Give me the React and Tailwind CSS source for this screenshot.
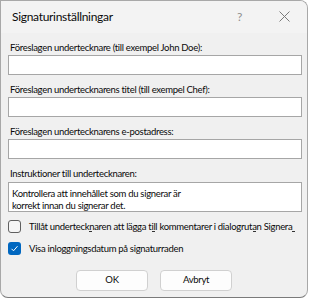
import React from "react";

const font = { fontFamily: 'Lato, "Liberation Sans", Arial, sans-serif' };
const txt = "text-[9.5px] tracking-[-0.3px] text-[#0a0a0a]";

function Label({ children, className = "" }) {
  return (
    <div className={"h-[14px] leading-[14px] pl-[2px] whitespace-nowrap " + txt + " " + className}>
      {children}
    </div>
  );
}

function Input() {
  return <div className="h-[20px] w-[294px] bg-white border border-[#a6a6a6]" />;
}

export default function App() {
  return (
    <div className="w-[310px] h-[300px] bg-white" style={font}>
      <div className="w-[308px] h-[298px] bg-[#f0f0f0] border border-[#a8a8a8] border-b-[#7a7a7a] rounded-tr-[8px] rounded-b-[8px] overflow-hidden flex flex-col">
        <div className="h-[32px] shrink-0 bg-[#f3f3f3] flex items-center pl-[11px] relative">
          <span className="text-[12px] tracking-[-0.3px] text-[#0a0a0a]">Signaturinställningar</span>
          <span className="absolute left-[236px] top-[8px] text-[12px] text-[#8f8f8f] leading-[16px]">?</span>
          <svg className="absolute left-[278px] top-[10px]" width="11" height="11" viewBox="0 0 11 11">
            <path d="M0.5 0.5 L10.5 10.5 M10.5 0.5 L0.5 10.5" stroke="#7a7a7a" strokeWidth="1" />
          </svg>
        </div>
        <div className="flex flex-col pl-[7px]">
          <Label className="mt-[8px]">Föreslagen undertecknare (till exempel John Doe):</Label>
          <Input />
          <Label className="mt-[8px]">Föreslagen undertecknarens titel (till exempel Chef):</Label>
          <Input />
          <Label className="mt-[8px]">Föreslagen undertecknarens e-postadress:</Label>
          <Input />
          <Label className="mt-[8px]">Instruktioner till undertecknaren:</Label>
          <div className={"mt-[1px] h-[30px] w-[294px] bg-white border border-[#a6a6a6] pl-[3px] pt-[5px] leading-[12px] whitespace-nowrap " + txt}>
            <div>Kontrollera att innehållet som du signerar är</div>
            <div>korrekt innan du signerar det.</div>
          </div>
          <div className="mt-[8px] flex items-center h-[13px] relative">
            <div className="w-[13px] h-[13px] rounded-[3px] border border-[#5f5f5f] bg-[#f5f5f5]" />
            <span className={"ml-[8px] leading-[13px] whitespace-nowrap " + txt}>
              Tillåt undertecknaren att lägga till kommentarer i dialogrutan Signera
            </span>
            <span className="absolute left-[81px] top-[11px] w-[3px] h-[1px] bg-[#333]" />
            <span className="absolute left-[144px] top-[11px] w-[3px] h-[1px] bg-[#333]" />
            <span className="absolute left-[245px] top-[11px] w-[3px] h-[1px] bg-[#333]" />
            <span className="absolute left-[284px] top-[11px] w-[3px] h-[1px] bg-[#333]" />
          </div>
          <div className="mt-[9px] flex items-center h-[13px]">
            <div className="w-[13px] h-[13px] rounded-[3px] bg-[#0067c0] flex items-center justify-center">
              <svg width="9" height="9" viewBox="0 0 9 9">
                <path d="M1.5 4.8 L3.5 6.8 L7.5 2.2" stroke="white" strokeWidth="1" fill="none" />
              </svg>
            </div>
            <span className={"ml-[8px] leading-[13px] whitespace-nowrap " + txt}>
              Visa inloggningsdatum på signaturraden
            </span>
          </div>
          <div className="mt-[15px] flex gap-[12px] pl-[68px]">
            <div className={"w-[72px] h-[21px] rounded-[4px] bg-[#fdfdfd] border border-[#d0d0d0] flex items-center justify-center " + txt}>OK</div>
            <div className={"w-[72px] h-[21px] rounded-[4px] bg-[#fdfdfd] border border-[#d0d0d0] flex items-center justify-center " + txt}>Avbryt</div>
          </div>
        </div>
      </div>
    </div>
  );
}
